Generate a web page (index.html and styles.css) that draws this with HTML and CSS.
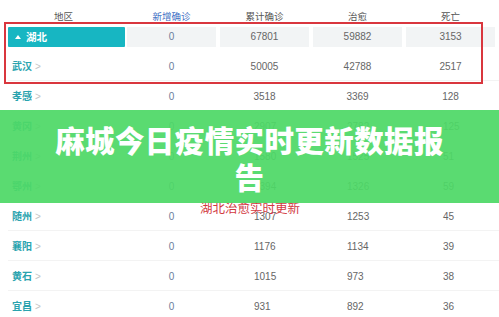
FILE: index.html
```html
<!DOCTYPE html>
<html lang="zh-CN">
<head>
<meta charset="utf-8">
<title>麻城今日疫情实时更新数据报告</title>
<link rel="stylesheet" href="styles.css">
</head>
<body>
<div class="page">
  <div class="table">
    <div class="row head">
      <div class="c region-h">地区</div>
      <div class="c new-h">新增确诊</div>
      <div class="c">累计确诊</div>
      <div class="c">治愈</div>
      <div class="c">死亡</div>
    </div>
    <div class="row prov">
      <div class="c prov-name"><span class="tri"></span>湖北</div>
      <div class="c cell zero">0</div>
      <div class="c cell">67801</div>
      <div class="c cell">59882</div>
      <div class="c cell">3153</div>
    </div>
    <div class="row city">
      <div class="c name">武汉<span class="chev">&gt;</span></div>
      <div class="c zero">0</div>
      <div class="c">50005</div>
      <div class="c">42788</div>
      <div class="c">2517</div>
    </div>
    <div class="row city">
      <div class="c name">孝感<span class="chev">&gt;</span></div>
      <div class="c zero">0</div>
      <div class="c">3518</div>
      <div class="c">3369</div>
      <div class="c">128</div>
    </div>
    <div class="row city left">
      <div class="c name">黄冈<span class="chev">&gt;</span></div>
      <div class="c zero">0</div>
      <div class="c">2907</div>
      <div class="c">2782</div>
      <div class="c">125</div>
    </div>
    <div class="row city left">
      <div class="c name">荆州<span class="chev">&gt;</span></div>
      <div class="c zero">0</div>
      <div class="c">1580</div>
      <div class="c">1525</div>
      <div class="c">51</div>
    </div>
    <div class="row city left">
      <div class="c name">鄂州<span class="chev">&gt;</span></div>
      <div class="c zero">0</div>
      <div class="c">1394</div>
      <div class="c">1326</div>
      <div class="c">59</div>
    </div>
    <div class="row city left">
      <div class="c name">随州<span class="chev">&gt;</span></div>
      <div class="c zero">0</div>
      <div class="c">1307</div>
      <div class="c">1253</div>
      <div class="c">45</div>
    </div>
    <div class="row city left">
      <div class="c name">襄阳<span class="chev">&gt;</span></div>
      <div class="c zero">0</div>
      <div class="c">1176</div>
      <div class="c">1134</div>
      <div class="c">39</div>
    </div>
    <div class="row city left">
      <div class="c name">黄石<span class="chev">&gt;</span></div>
      <div class="c zero">0</div>
      <div class="c">1015</div>
      <div class="c">973</div>
      <div class="c">38</div>
    </div>
    <div class="row city left">
      <div class="c name">宜昌<span class="chev">&gt;</span></div>
      <div class="c zero">0</div>
      <div class="c">931</div>
      <div class="c">892</div>
      <div class="c">36</div>
    </div>
  </div>

  <div class="redbox"></div>
  <div class="caption">湖北治愈实时更新</div>
  <div class="banner">
    <h1 class="title">麻城今日疫情实时更新数据报告</h1>
  </div>
</div>
</body>
</html>
```

FILE: styles.css
```css
html, body {
  margin: 0;
  padding: 0;
  background: #ffffff;
}

.page {
  position: relative;
  width: 499px;
  height: 317px;
  overflow: hidden;
  font-family: "Liberation Sans", "Noto Sans CJK SC", Arial, sans-serif;
  font-size: 10px;
  color: #666666;
}

.table {
  display: flex;
  flex-direction: column;
  padding-left: 8px;
}

.row {
  display: grid;
  grid-template-columns: 115px 89px 89px 89px 89px;
  column-gap: 4px;
  align-items: center;
}

.c {
  text-align: center;
  white-space: nowrap;
}

.head {
  height: 27px;
  align-items: start;
  padding-top: 10px;
  box-sizing: border-box;
  line-height: 12px;
  font-size: 9.5px;
  color: #555555;
  font-family: "Noto Sans CJK SC", sans-serif;
}

.head .region-h {
  padding-right: 4px;
}

.head .new-h {
  color: #3f6fc4;
}

.prov {
  height: 20px;
  line-height: 20px;
  margin-bottom: 4px;
}

.prov-name {
  background: #17b6c2;
  color: #ffffff;
  font-weight: bold;
  font-family: "Noto Sans CJK SC", sans-serif;
  font-size: 10.5px;
  text-align: left;
  padding-left: 7px;
  margin-right: -2px;
  display: flex;
  align-items: center;
  gap: 5px;
  height: 20px;
  border-radius: 1px;
}

.tri {
  width: 0;
  height: 0;
  border-left: 3px solid transparent;
  border-right: 3px solid transparent;
  border-bottom: 4px solid #ffffff;
}

.prov .cell {
  background: #f2f4f5;
  height: 20px;
}

.city {
  height: 30px;
  line-height: 30px;
  border-bottom: 1px solid #f3f3f3;
  box-sizing: border-box;
}

.name {
  text-align: left;
  padding-left: 4px;
  color: #2aa3ae;
  font-family: "Noto Sans CJK SC", sans-serif;
  font-weight: 700;
  font-size: 10px;
}

.chev {
  color: #c4c4c4;
  margin-left: 3px;
  font-weight: normal;
  font-family: "Liberation Sans", sans-serif;
}

.zero {
  color: #6b7d9b;
}

.left .c:nth-child(n+3) {
  text-align: left;
  padding-left: 34px;
}

.left .c:nth-child(5) {
  padding-left: 37px;
}

.redbox {
  position: absolute;
  left: 4px;
  top: 22px;
  width: 479px;
  height: 62px;
  border: 2px solid #d9363e;
  box-sizing: border-box;
}

.caption {
  position: absolute;
  left: 200px;
  top: 201px;
  font-family: "Noto Sans CJK SC", sans-serif;
  font-size: 12.5px;
  line-height: 14px;
  color: #d2393f;
}

.banner {
  position: absolute;
  left: 0;
  top: 110px;
  width: 499px;
  height: 93px;
  background: rgba(78, 216, 102, 0.93);
  display: flex;
  justify-content: center;
  padding-top: 11px;
  box-sizing: border-box;
}

.title {
  margin: 0;
  width: 400px;
  text-align: center;
  color: #ffffff;
  font-family: "Noto Sans CJK SC", sans-serif;
  font-weight: 900;
  font-size: 29.5px;
  line-height: 37px;
  letter-spacing: 0.4px;
}
```
